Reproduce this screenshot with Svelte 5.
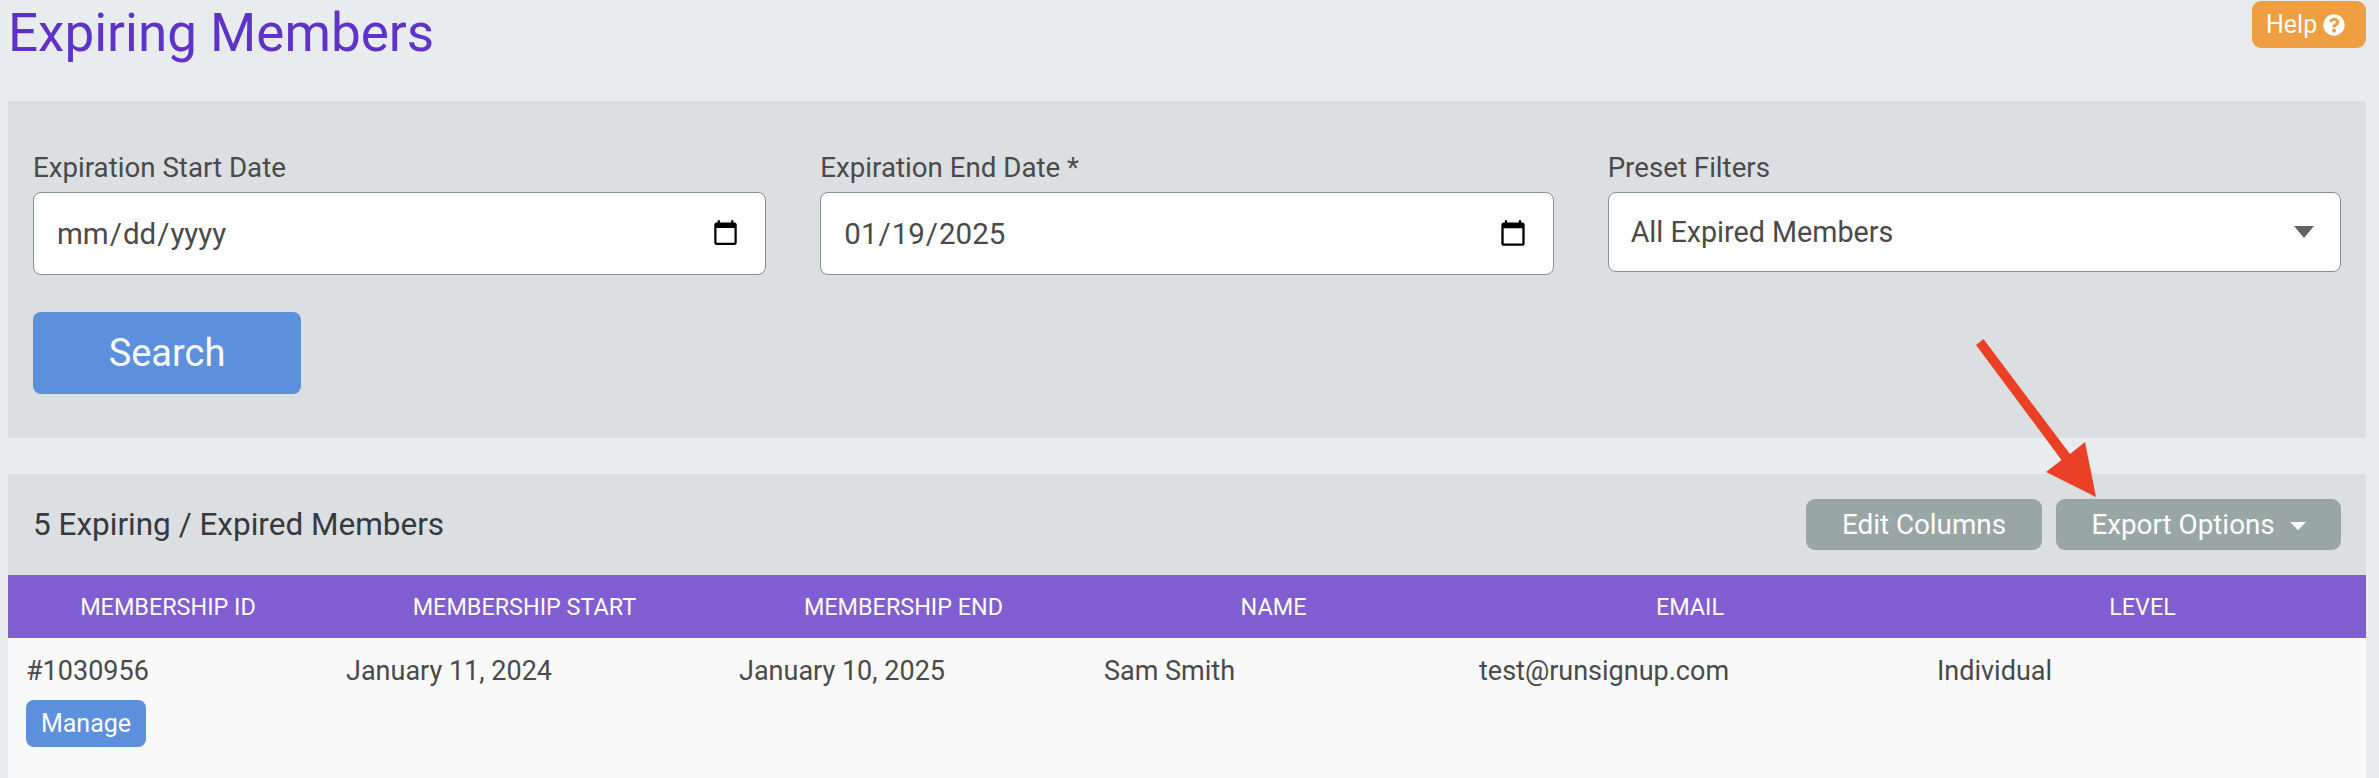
<script lang="ts">
	const columns = [
		'Membership ID',
		'Membership Start',
		'Membership End',
		'Name',
		'Email',
		'Level'
	];
	const members = [
		{
			id: '#1030956',
			start: 'January 11, 2024',
			end: 'January 10, 2025',
			name: 'Sam Smith',
			email: 'test@runsignup.com',
			level: 'Individual'
		}
	];
</script>

<div class="page">
	<header class="top">
		<h1>Expiring Members</h1>
		<button class="help">
			Help
			<svg viewBox="0 0 512 512" aria-hidden="true">
				<path
					fill="currentColor"
					d="M504 256c0 136.997-111.043 248-248 248S8 392.997 8 256C8 119.083 119.043 8 256 8s248 111.083 248 248zM262.655 90c-54.497 0-89.255 22.957-116.549 63.758-3.536 5.286-2.353 12.415 2.715 16.258l34.699 26.31c5.205 3.947 12.621 3.008 16.665-2.122 17.864-22.658 30.113-35.797 57.303-35.797 20.429 0 45.698 13.148 45.698 32.958 0 14.976-12.363 22.667-32.534 33.976C247.128 238.528 216 254.941 216 296v4c0 6.627 5.373 12 12 12h56c6.627 0 12-5.373 12-12v-1.333c0-28.462 83.186-29.647 83.186-106.667 0-58.002-60.165-102-116.531-102zM256 338c-25.365 0-46 20.635-46 46 0 25.364 20.635 46 46 46s46-20.636 46-46c0-25.365-20.635-46-46-46z"
				/>
			</svg>
		</button>
	</header>

	<section class="filters">
		<div class="fields">
			<label>
				<span>Expiration Start Date</span>
				<input type="date" />
			</label>
			<label>
				<span>Expiration End Date *</span>
				<input type="date" value="2025-01-19" />
			</label>
			<label>
				<span>Preset Filters</span>
				<div class="select-wrap">
					<select>
						<option>All Expired Members</option>
					</select>
				</div>
			</label>
		</div>
		<button class="search">Search</button>
	</section>

	<section class="results">
		<div class="results-head">
			<h2>5 Expiring / Expired Members</h2>
			<div class="actions">
				<button class="grey edit">Edit Columns</button>
				<button class="grey export">Export Options <i class="caret"></i></button>
			</div>
		</div>
		<table>
			<thead>
				<tr>
					{#each columns as col}
						<th>{col}</th>
					{/each}
				</tr>
			</thead>
			<tbody>
				{#each members as m}
					<tr>
						<td>
							{m.id}
							<button class="manage">Manage</button>
						</td>
						<td>{m.start}</td>
						<td>{m.end}</td>
						<td>{m.name}</td>
						<td>{m.email}</td>
						<td>{m.level}</td>
					</tr>
				{/each}
			</tbody>
		</table>
	</section>

	<!-- annotation drawn on top of the screenshot -->
	<svg class="annotation" viewBox="0 0 2379 778" aria-hidden="true">
		<polygon
			fill="#ea4025"
			points="1976,345 1983.5,339 2070,454 2085,442 2096,497 2046,472 2061.5,460"
		/>
	</svg>
</div>

<style>
	:global(body) {
		background: #e8ecef;
		overflow: hidden;
	}

	.page {
		position: relative;
		height: 778px;
		padding: 0 13px 0 8px;
		box-sizing: border-box;
		font-family: Roboto, sans-serif;
		color: #4a4a4a;
	}

	button {
		font-family: inherit;
		border: none;
		color: #fff;
	}

	.top {
		display: flex;
		justify-content: space-between;
		align-items: flex-start;
		height: 101px;
	}

	h1 {
		margin: 0;
		font-size: 53px;
		font-weight: 400;
		line-height: 66px;
		color: #5f33c9;
	}

	.help {
		display: flex;
		align-items: center;
		gap: 6px;
		width: 114px;
		height: 47px;
		margin-top: 1px;
		padding: 0 0 0 14px;
		background: #f09e42;
		border-radius: 9px;
		font-size: 25px;
	}

	.help svg {
		width: 22px;
		height: 22px;
	}

	.filters {
		height: 337px;
		padding: 49px 25px 0;
		box-sizing: border-box;
		background: #dbdfe2;
	}

	.fields {
		display: grid;
		grid-template-columns: repeat(3, 1fr);
		column-gap: 54px;
	}

	label {
		display: block;
	}

	label span {
		display: block;
		height: 42px;
		font-size: 27.7px;
		line-height: 36px;
	}

	input,
	select {
		display: block;
		width: 100%;
		box-sizing: border-box;
		background: #fff;
		border: 1px solid #868e96;
		border-radius: 8px;
		font-family: inherit;
		color: #4a4a4a;
	}

	input {
		height: 83px;
		padding: 0 23px 0 22px;
		font-size: 29.5px;
	}

	select {
		height: 80px;
		padding: 0 22px;
		font-size: 28.7px;
		appearance: none;
	}

	.select-wrap {
		position: relative;
	}

	.select-wrap::after {
		content: '';
		position: absolute;
		top: 34px;
		right: 27px;
		border-style: solid;
		border-width: 12px 10px 0;
		border-color: #5f6367 transparent transparent;
	}

	.search {
		display: block;
		width: 268px;
		height: 82px;
		margin-top: 37px;
		background: #5c8fdc;
		border-radius: 8px;
		font-size: 38px;
	}

	.results {
		margin-top: 36px;
		background: #dbdfe2;
	}

	.results-head {
		display: flex;
		justify-content: space-between;
		align-items: center;
		height: 101px;
		padding: 0 25px;
		box-sizing: border-box;
	}

	h2 {
		margin: 0;
		font-size: 31.5px;
		font-weight: 400;
		color: #343a40;
	}

	.actions {
		display: flex;
		gap: 14px;
	}

	.grey {
		height: 51px;
		background: #98a6a6;
		border-radius: 9px;
		font-size: 27.8px;
	}

	.edit {
		width: 236px;
	}

	.export {
		width: 285px;
	}

	.caret {
		display: inline-block;
		margin-left: 8px;
		vertical-align: 4px;
		border-style: solid;
		border-width: 8px 8px 0;
		border-color: #fff transparent transparent;
	}

	table {
		width: 100%;
		table-layout: fixed;
		border-collapse: collapse;
	}

	th {
		height: 63px;
		padding: 0;
		background: #805dd0;
		color: #fff;
		font-size: 23.4px;
		font-weight: 400;
		text-transform: uppercase;
	}

	th:nth-child(1) { width: 320px; }
	th:nth-child(2) { width: 393px; }
	th:nth-child(3) { width: 365px; }
	th:nth-child(4) { width: 375px; }
	th:nth-child(5) { width: 458px; }

	td {
		height: 140px;
		padding: 17px 18px 0;
		box-sizing: border-box;
		background: #f9f9f9;
		font-size: 27px;
		line-height: 32px;
		vertical-align: top;
	}

	.manage {
		display: block;
		width: 120px;
		height: 47px;
		margin: 13px 0 0;
		padding: 0;
		background: #5c8fdc;
		border-radius: 8px;
		font-size: 25px;
	}

	.annotation {
		position: absolute;
		inset: 0;
		width: 2379px;
		height: 778px;
		pointer-events: none;
	}
</style>
